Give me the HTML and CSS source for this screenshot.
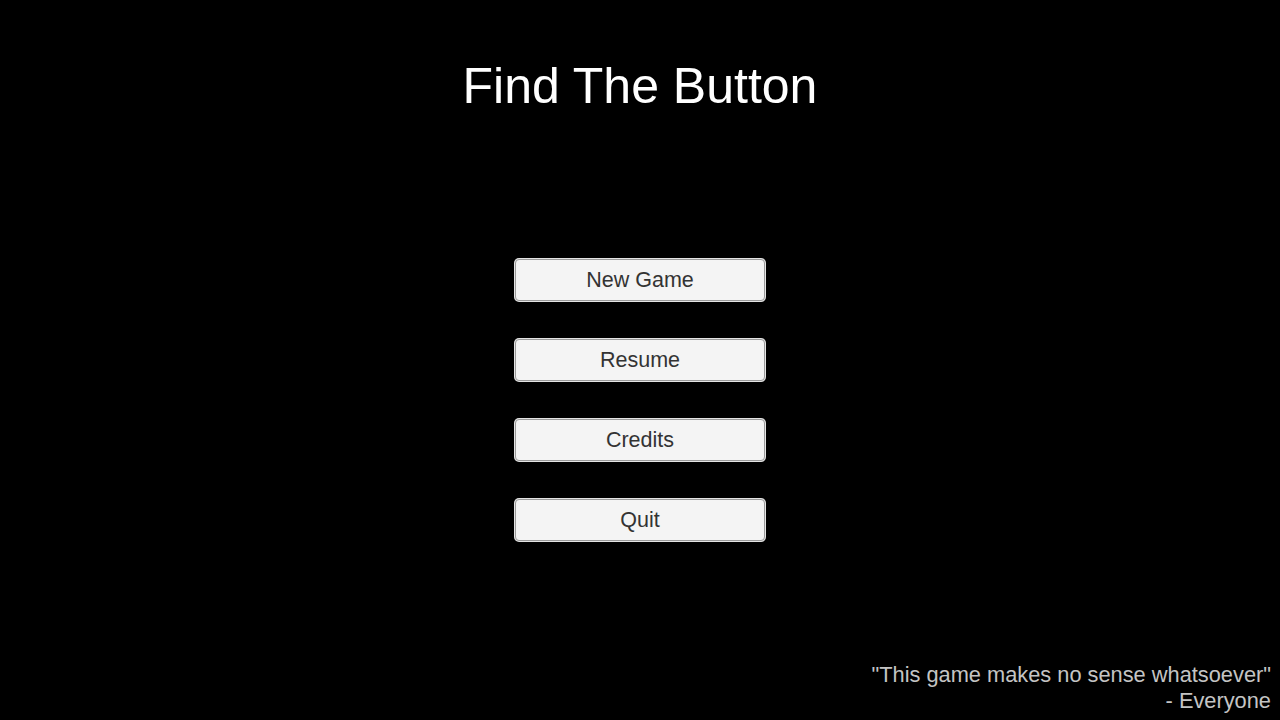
FILE: index.html
```html
<!DOCTYPE html>
<html lang="en">
<head>
<meta charset="utf-8">
<title>Find The Button</title>
<link rel="stylesheet" href="styles.css">
</head>
<body>
<div class="screen">
  <h1 class="title">Find The Button</h1>
  <nav class="menu">
    <button class="menu-btn">New Game</button>
    <button class="menu-btn">Resume</button>
    <button class="menu-btn">Credits</button>
    <button class="menu-btn">Quit</button>
  </nav>
  <div class="quote">
    <div>"This game makes no sense whatsoever"</div>
    <div>- Everyone</div>
  </div>
</div>
</body>
</html>
```

FILE: styles.css
```css
html, body {
  margin: 0;
  padding: 0;
  background: #000;
}
.screen {
  width: 1280px;
  height: 720px;
  display: flex;
  flex-direction: column;
  align-items: center;
  font-family: "Liberation Sans", Arial, sans-serif;
  box-sizing: border-box;
  padding-bottom: 6px;
}
.title {
  margin: 57px 0 0 0;
  font-size: 50px;
  line-height: 58px;
  font-weight: normal;
  color: #ffffff;
}
.menu {
  margin-top: 144px;
  display: flex;
  flex-direction: column;
  gap: 38px;
}
.menu-btn {
  width: 250px;
  height: 42px;
  box-sizing: border-box;
  background: #f4f4f4;
  border: 1px solid #9a9a9a;
  box-shadow: 0 0 0 1px #e4e4e4;
  border-radius: 4px;
  font-family: "Liberation Sans", Arial, sans-serif;
  font-size: 21.5px;
  color: #333333;
  padding: 1px 0 0 0;
  line-height: 39px;
}
.quote {
  margin-top: auto;
  align-self: flex-end;
  margin-right: 9px;
  text-align: right;
  font-size: 21.8px;
  line-height: 26px;
  color: #c4c4c4;
}
```
